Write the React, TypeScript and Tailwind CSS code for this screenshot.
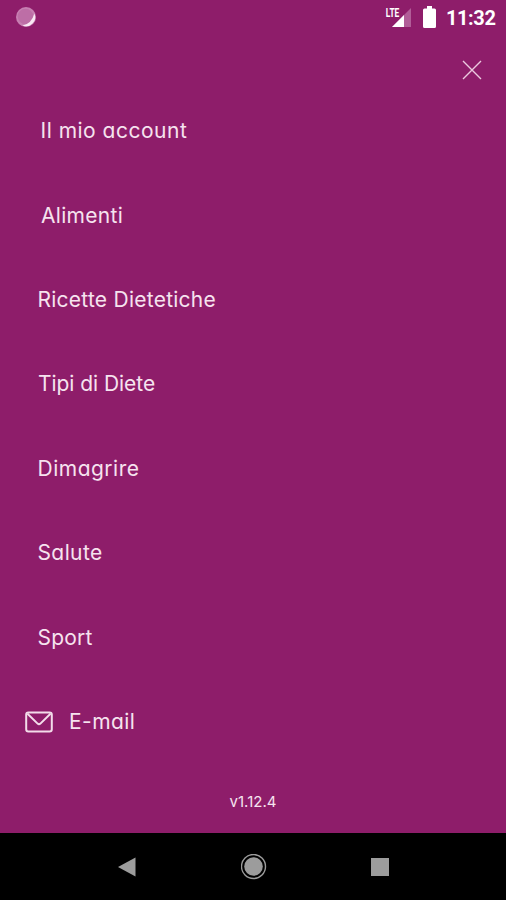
interface MenuItem {
  label: string;
  className: string;
  icon?: boolean;
}

const items: MenuItem[] = [
  { label: "Il mio account", className: "pl-[40.5px] tracking-[0.5px]" },
  { label: "Alimenti", className: "pl-[41px] tracking-[0.3px]" },
  { label: "Ricette Dietetiche", className: "pl-[37.5px] tracking-[0.25px]" },
  { label: "Tipi di Diete", className: "pl-[38px] tracking-[-0.05px]" },
  { label: "Dimagrire", className: "pl-[37.5px] tracking-[0.5px]" },
  { label: "Salute", className: "pl-[37.5px] tracking-[0.4px]" },
  { label: "Sport", className: "pl-[37.5px] tracking-[0.2px]" },
  { label: "E-mail", className: "pl-[25px] tracking-[0.45px]", icon: true },
];

const MailIcon = () => (
  <svg width="28" height="22" viewBox="0 0 28 22" fill="none" stroke="#f3dcea" strokeWidth="2" className="mr-[16px] mt-[1px] shrink-0">
    <rect x="1.2" y="1.4" width="25.6" height="19" rx="2.2" />
    <path d="M2.5 2.8 L12.6 12.6 Q14 13.8 15.4 12.6 L25.5 2.8" />
  </svg>
);

const StatusBar = () => (
  <div className="flex h-9 shrink-0 items-start pl-4 pr-[10.5px]">
    <svg width="21" height="21" viewBox="0 0 21 21" className="mt-[7px]">
      <circle cx="10" cy="10" r="10" fill="#c77fb2" />
      <circle cx="9.5" cy="9.5" r="7.8" fill="#bd6ea6" />
      <path d="M18.4 6.5 A9 9 0 0 1 6.5 18.4 Q15.5 17 18.4 6.5Z" fill="#f8e8f3" />
    </svg>
    <svg width="27" height="22" viewBox="0 0 27 22" className="ml-auto mt-[6px]">
      <path d="M26 2 V21 H7Z" fill="#b15d98" />
      <path d="M19 9 V21 H7Z" fill="#fff" />
      <text x="0.8" y="10.5" fill="#fff" textLength="13.5" lengthAdjust="spacingAndGlyphs" className="font-['Roboto',sans-serif] text-[13px] font-bold">
        LTE
      </text>
    </svg>
    <svg width="13" height="22" viewBox="0 0 13 22" className="ml-[11px] mt-[6px]">
      <path d="M4 0 H9 V2.5 H11.5 Q13 2.5 13 4 V20.5 Q13 22 11.5 22 H1.5 Q0 22 0 20.5 V4 Q0 2.5 1.5 2.5 H4Z" fill="#fff" />
    </svg>
    <span className="ml-[10px] mt-[6px] font-['Roboto',sans-serif] text-[20px] font-bold leading-6 tracking-[-0.4px] text-white">11:32</span>
  </div>
);

const NavBar = () => (
  <div className="flex h-[67px] shrink-0 items-center justify-between bg-black pl-[118px] pr-[117px]">
    <svg width="18" height="20" viewBox="0 0 18 20">
      <path d="M0 10 L17.5 0.5 V19.5Z" fill="#9c9c9c" />
    </svg>
    <svg width="26" height="26" viewBox="0 0 26 26">
      <circle cx="12.5" cy="12.5" r="12" fill="none" stroke="#9c9c9c" strokeWidth="1.4" />
      <circle cx="12.5" cy="12.5" r="9.3" fill="#9c9c9c" />
    </svg>
    <div className="size-[18px] bg-[#9c9c9c]" />
  </div>
);

export default function App() {
  return (
    <div className="flex h-[900px] w-[506px] flex-col overflow-hidden bg-[#8e1d6a] font-['Inter','Liberation_Sans',sans-serif] text-[#f6e3ef] [font-feature-settings:'cv11']">
      <StatusBar />
      <div className="flex h-[53px] shrink-0 items-start justify-end pr-[24.5px] pt-[23.5px]">
        <button aria-label="Chiudi">
          <svg width="20" height="20" viewBox="0 0 20 20" stroke="#ecc9df" strokeWidth="1.4" fill="none">
            <path d="M1 1 L19 19 M19 1 L1 19" />
          </svg>
        </button>
      </div>
      <nav className="shrink-0">
        {items.map((item) => (
          <a key={item.label} className={`flex h-[84.4px] items-center whitespace-nowrap text-[21px] leading-7 ${item.className}`}>
            {item.icon && <MailIcon />}
            <span>{item.label}</span>
          </a>
        ))}
      </nav>
      <div className="flex grow items-start justify-center pt-[25.5px] text-[15px] leading-6">v1.12.4</div>
      <NavBar />
    </div>
  );
}
